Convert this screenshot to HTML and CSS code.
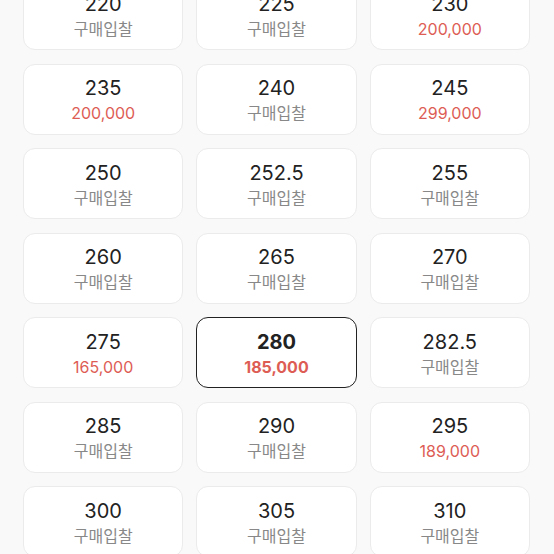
FILE: index.html
```html
<!DOCTYPE html>
<html lang="ko">
<head>
    <meta charset="UTF-8">
    <meta name="viewport" content="width=device-width, initial-scale=1.0">
    <title>사이즈 선택</title>
    <link rel="stylesheet" href="styles.css">
</head>
<body>
    <div id="sizes">
        <div class="size"><span class="num">220</span><span class="bid">구매입찰</span></div>
        <div class="size"><span class="num">225</span><span class="bid">구매입찰</span></div>
        <div class="size"><span class="num">230</span><span class="price">200,000</span></div>

        <div class="size"><span class="num">235</span><span class="price">200,000</span></div>
        <div class="size"><span class="num">240</span><span class="bid">구매입찰</span></div>
        <div class="size"><span class="num">245</span><span class="price">299,000</span></div>

        <div class="size"><span class="num">250</span><span class="bid">구매입찰</span></div>
        <div class="size"><span class="num">252.5</span><span class="bid">구매입찰</span></div>
        <div class="size"><span class="num">255</span><span class="bid">구매입찰</span></div>

        <div class="size"><span class="num">260</span><span class="bid">구매입찰</span></div>
        <div class="size"><span class="num">265</span><span class="bid">구매입찰</span></div>
        <div class="size"><span class="num">270</span><span class="bid">구매입찰</span></div>

        <div class="size"><span class="num">275</span><span class="price">165,000</span></div>
        <div class="size active"><span class="num">280</span><span class="price">185,000</span></div>
        <div class="size"><span class="num">282.5</span><span class="bid">구매입찰</span></div>

        <div class="size"><span class="num">285</span><span class="bid">구매입찰</span></div>
        <div class="size"><span class="num">290</span><span class="bid">구매입찰</span></div>
        <div class="size"><span class="num">295</span><span class="price">189,000</span></div>

        <div class="size"><span class="num">300</span><span class="bid">구매입찰</span></div>
        <div class="size"><span class="num">305</span><span class="bid">구매입찰</span></div>
        <div class="size"><span class="num">310</span><span class="bid">구매입찰</span></div>
    </div>
</body>
</html>
```

FILE: styles.css
```css
* {
    margin: 0;
    padding: 0;
    box-sizing: border-box;
}

body {
    background-color: #f9f9f9;
    font-family: Inter, 'Noto Sans CJK KR', sans-serif;
    overflow: hidden;
}

#sizes {
    display: grid;
    grid-template-columns: repeat(3, 1fr);
    column-gap: 13px;
    row-gap: 13.5px;
    padding: 0 24px 0 23px;
    margin-top: -21px;
}

.size {
    height: 71px;
    padding-top: 3px;
    display: flex;
    flex-direction: column;
    align-items: center;
    justify-content: center;
    gap: 2px;
    background-color: #fff;
    border: 1px solid #ebebeb;
    border-radius: 12px;
}

.size .num {
    font-size: 20px;
    line-height: 24px;
    color: #222;
}

.size .bid {
    font-size: 16px;
    line-height: 23px;
    color: #888;
}

.size .price {
    font-size: 16px;
    line-height: 23px;
    color: #dd5d55;
}

.size.active {
    border: 1.5px solid #222;
}

.size.active .num,
.size.active .price {
    font-weight: 700;
}
```
